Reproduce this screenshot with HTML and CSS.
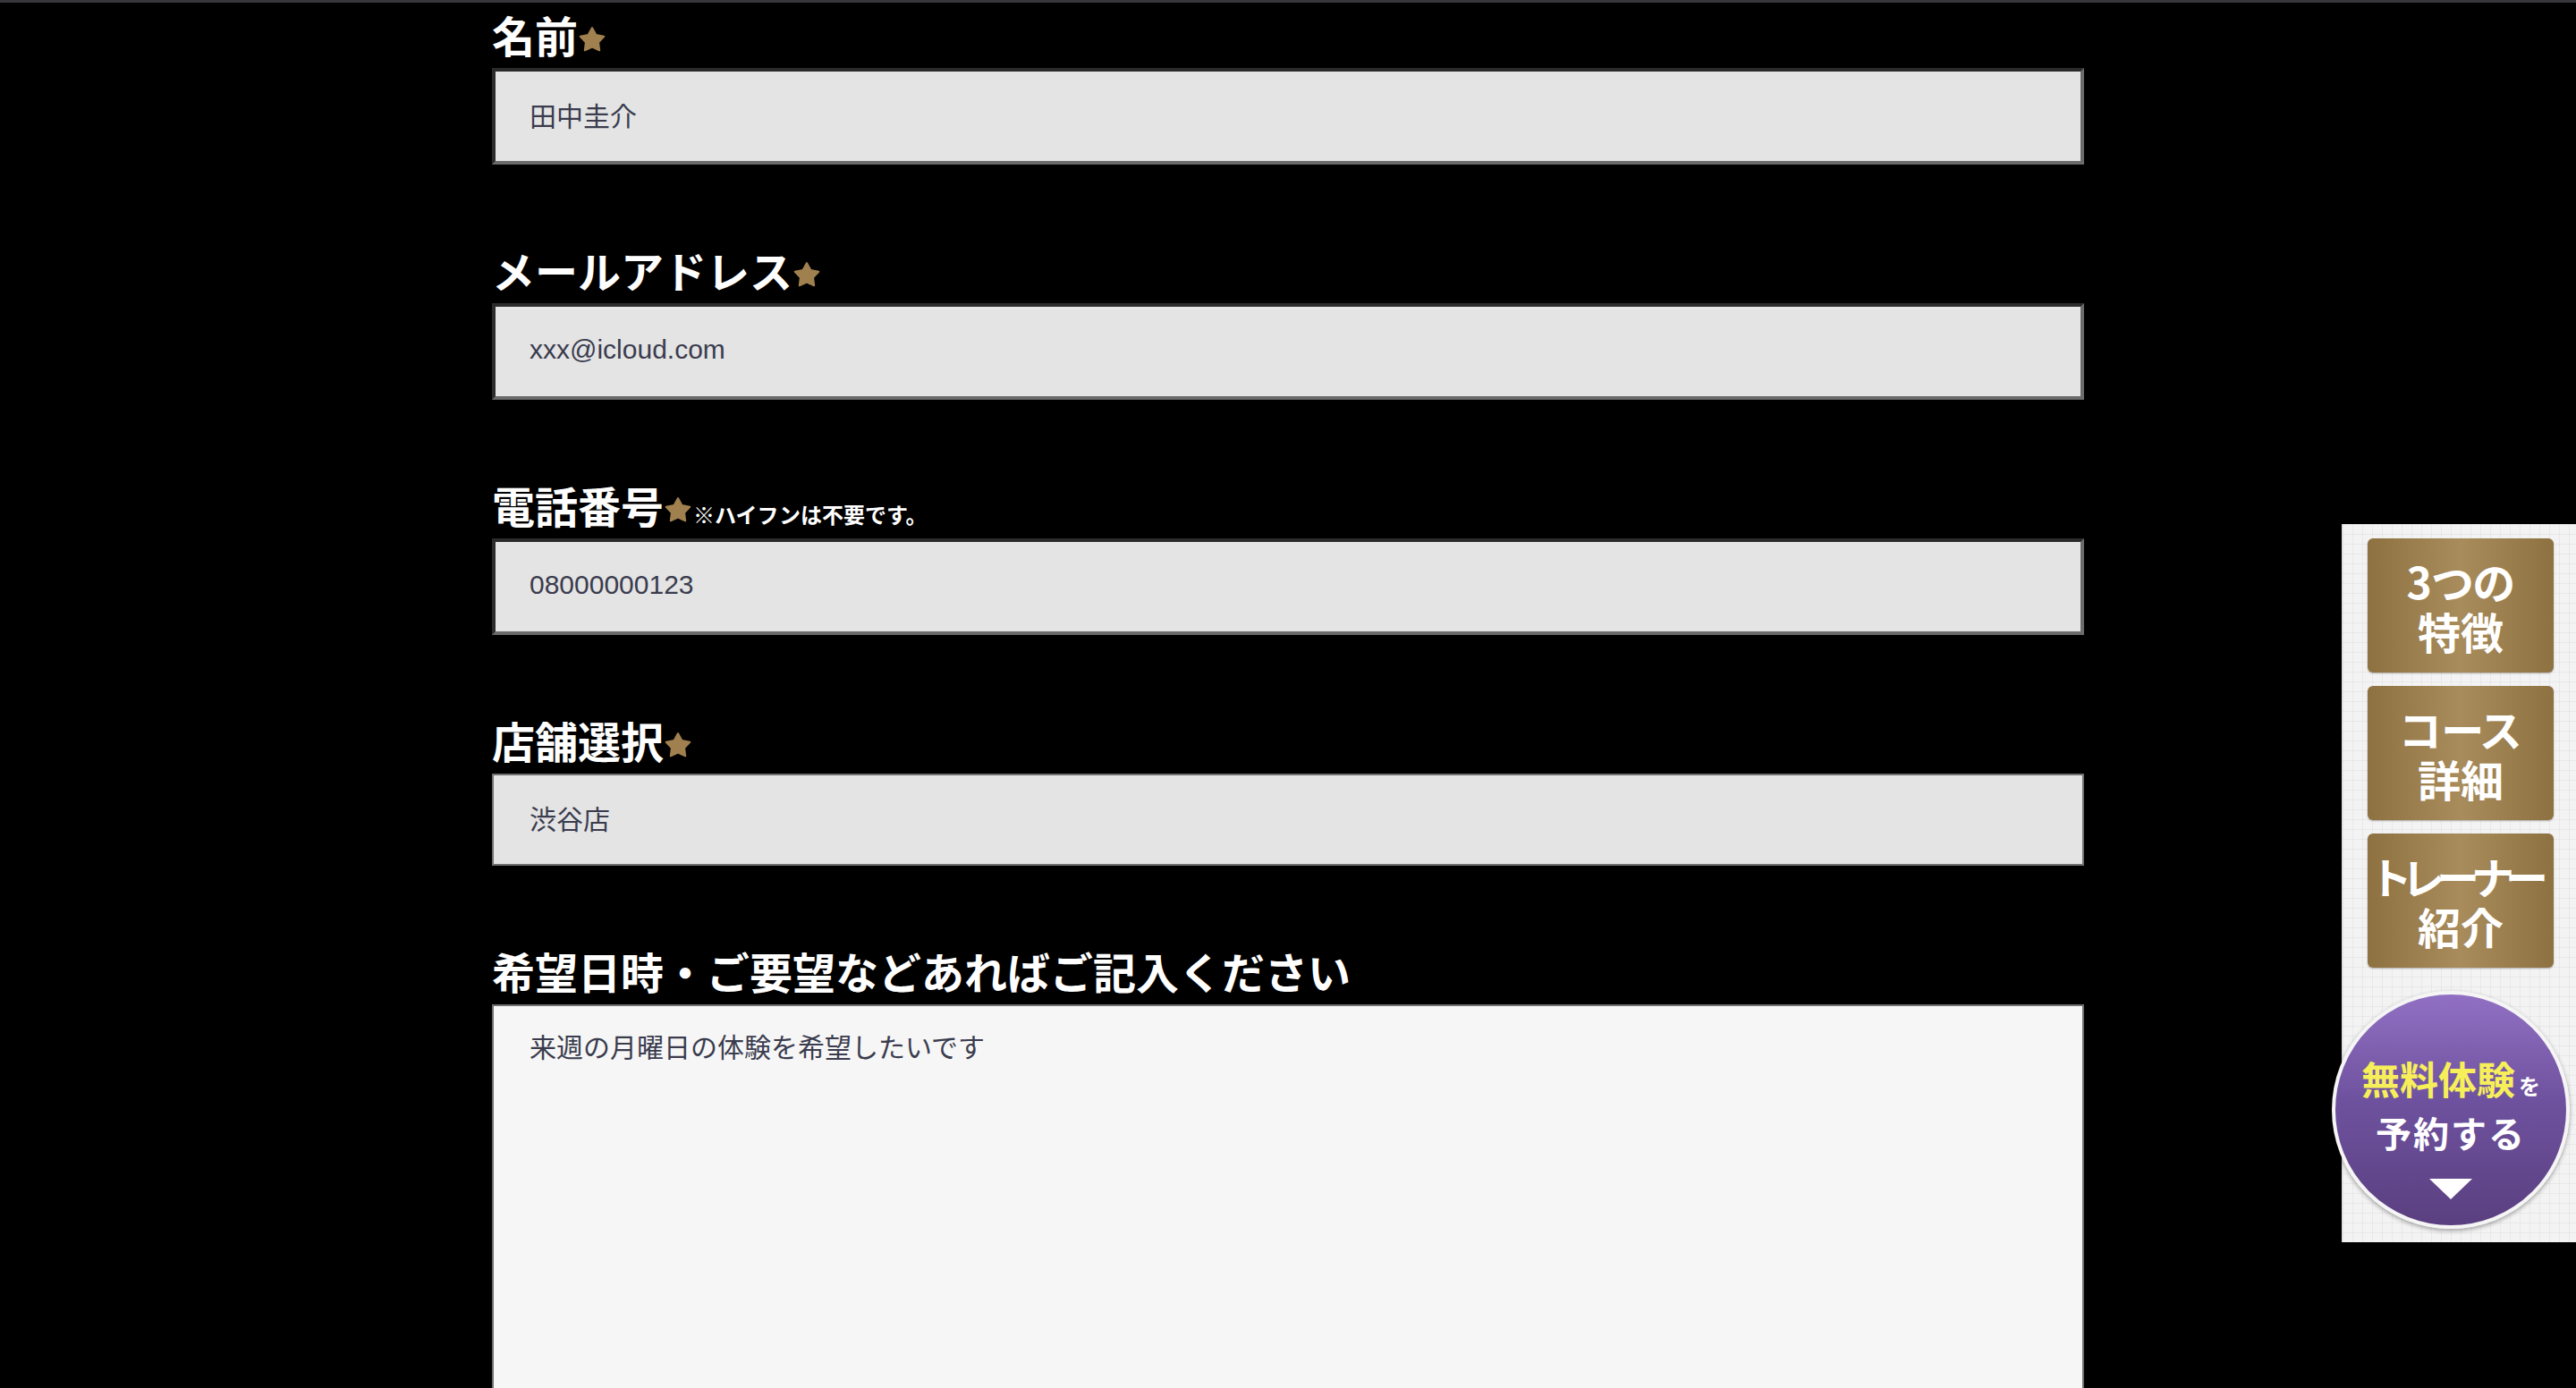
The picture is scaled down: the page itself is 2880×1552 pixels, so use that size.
FILE: index.html
```html
<!DOCTYPE html>
<html lang="ja">

<head>
    <meta charset="UTF-8">
    <title>無料体験予約フォーム</title>
    <link rel="stylesheet" href="styles.css">
</head>

<body>

    <div class="topbar"></div>

    <main class="form">
        <div class="field">
            <label class="label" for="name">名前<svg class="star" viewBox="0 0 30 30"><path d="M15 2 L19.4 9.9 L28.3 11.7 L22.1 18.3 L23.2 27.3 L15 23.5 L6.8 27.3 L7.9 18.3 L1.7 11.7 L10.6 9.9 Z" /></svg></label>
            <input class="text-input" id="name" type="text" value="田中圭介">
        </div>

        <div class="field">
            <label class="label" for="mail">メールアドレス<svg class="star" viewBox="0 0 30 30"><path d="M15 2 L19.4 9.9 L28.3 11.7 L22.1 18.3 L23.2 27.3 L15 23.5 L6.8 27.3 L7.9 18.3 L1.7 11.7 L10.6 9.9 Z" /></svg></label>
            <input class="text-input" id="mail" type="text" value="xxx@icloud.com">
        </div>

        <div class="field">
            <label class="label" for="tel">電話番号<svg class="star" viewBox="0 0 30 30"><path d="M15 2 L19.4 9.9 L28.3 11.7 L22.1 18.3 L23.2 27.3 L15 23.5 L6.8 27.3 L7.9 18.3 L1.7 11.7 L10.6 9.9 Z" /></svg><span class="note">※ハイフンは不要です。</span></label>
            <input class="text-input" id="tel" type="text" value="08000000123">
        </div>

        <div class="field">
            <label class="label" for="shop">店舗選択<svg class="star" viewBox="0 0 30 30"><path d="M15 2 L19.4 9.9 L28.3 11.7 L22.1 18.3 L23.2 27.3 L15 23.5 L6.8 27.3 L7.9 18.3 L1.7 11.7 L10.6 9.9 Z" /></svg></label>
            <select class="select" id="shop">
                <option>渋谷店</option>
            </select>
        </div>

        <div class="field">
            <label class="label" for="message">希望日時・ご要望などあればご記入ください</label>
            <textarea class="textarea" id="message">来週の月曜日の体験を希望したいです</textarea>
        </div>
    </main>

    <!-- 右側の固定メニュー -->
    <nav class="side-nav">
        <a class="side-btn" href="#"><span class="side-btn-text">3つの<br>特徴</span></a>
        <a class="side-btn" href="#"><span class="side-btn-text">コース<br>詳細</span></a>
        <a class="side-btn" href="#"><span class="side-btn-text"><span class="side-btn-tight">トレーナー</span><br>紹介</span></a>
        <a class="reserve" href="#">
            <span class="reserve-line1"><span class="reserve-yellow">無料体験</span><span class="reserve-small">を</span></span>
            <span class="reserve-line2">予約する</span>
            <span class="reserve-arrow"></span>
        </a>
    </nav>

</body>

</html>
```

FILE: styles.css
```css
html,
body {
    margin: 0;
    padding: 0;
    background-color: #000;
    font-family: "Noto Sans CJK JP", sans-serif;
}

.topbar {
    height: 3px;
    background-color: #37373b;
}

.form {
    width: 1780px;
    margin: 0 auto;
    padding-top: 7px;
}

.field {
    margin-bottom: 89px;
}

.label {
    display: block;
    height: 56px;
    margin-bottom: 10px;
    color: #fff;
    font-size: 48px;
    line-height: 56px;
    font-weight: 700;
    white-space: nowrap;
}

.star {
    width: 30px;
    height: 30px;
    margin-left: 1px;
    vertical-align: 0;
    overflow: visible;
    fill: #a0804f;
    stroke: #a0804f;
    stroke-width: 2;
    stroke-linejoin: round;
}

.note {
    font-size: 24px;
    line-height: 1;
    font-weight: 700;
    margin-left: 2px;
}

.text-input {
    display: block;
    box-sizing: border-box;
    width: 100%;
    height: 108px;
    margin: 0;
    padding: 0 38px 4px;
    border: 4px solid;
    border-color: #2b2b2b #6b6b6b #6b6b6b #2b2b2b;
    border-radius: 0;
    background-color: #e4e4e4;
    color: #3a3c4e;
    font-family: "Liberation Sans", "Noto Sans CJK JP", sans-serif;
    font-size: 30px;
    outline: none;
}

.select {
    display: block;
    box-sizing: border-box;
    width: 100%;
    height: 103px;
    margin: 0;
    padding: 0 40px;
    border: 2px solid #6f6f6f;
    border-radius: 0;
    background-color: #e4e4e4;
    color: #3a3c4e;
    font-family: "Liberation Sans", "Noto Sans CJK JP", sans-serif;
    font-size: 30px;
    -webkit-appearance: none;
    appearance: none;
    outline: none;
}

.textarea {
    display: block;
    box-sizing: border-box;
    width: 100%;
    height: 600px;
    margin: 0;
    padding: 24px 40px;
    border: 2px solid #6f6f6f;
    border-radius: 0;
    background-color: #f6f6f6;
    color: #3a3c4e;
    font-family: "Liberation Sans", "Noto Sans CJK JP", sans-serif;
    font-size: 30px;
    line-height: 45px;
    resize: none;
    outline: none;
}

/* 右側メニュー */
.side-nav {
    position: fixed;
    top: 586px;
    right: 0;
    width: 262px;
    box-sizing: border-box;
    padding: 16px 0 15px 28px;
    display: flex;
    flex-direction: column;
    align-items: flex-start;
    gap: 15px;
    border-left: 1px solid #d6d6d6;
    background-color: #f3f3f3;
    background-image:
        linear-gradient(to right, rgba(0, 0, 0, 0.045) 1px, transparent 1px),
        linear-gradient(to bottom, rgba(0, 0, 0, 0.045) 1px, transparent 1px);
    background-size: 11px 11px;
}

.side-btn {
    display: flex;
    align-items: center;
    justify-content: center;
    width: 208px;
    height: 150px;
    border-radius: 6px;
    background: linear-gradient(90deg, #8e7141 0%, #a98c5c 50%, #8e7141 100%);
    box-shadow: 0 1px 2px rgba(0, 0, 0, 0.3);
    color: #fff;
    text-decoration: none;
}

.side-btn-text {
    display: block;
    font-size: 48px;
    line-height: 56px;
    font-weight: 700;
    font-feature-settings: "palt";
    text-align: center;
    white-space: nowrap;
}

.side-btn-tight {
    letter-spacing: -7px;
    margin-left: -7px;
}

.reserve {
    display: flex;
    flex-direction: column;
    align-items: center;
    box-sizing: border-box;
    width: 266px;
    height: 266px;
    margin: 11px 0 0 -40px;
    padding-top: 61px;
    border: 4px solid #f5f5f5;
    border-radius: 50%;
    background: linear-gradient(180deg, #9170c3 0%, #6f529f 45%, #5a3f80 100%);
    box-shadow: 0 2px 5px rgba(0, 0, 0, 0.35);
    color: #fff;
    font-weight: 700;
    text-decoration: none;
}

.reserve-line1 {
    line-height: 64px;
    white-space: nowrap;
}

.reserve-yellow {
    color: #f7ef5a;
    font-size: 43px;
}

.reserve-small {
    font-size: 24px;
    margin-left: 4px;
}

.reserve-line2 {
    margin-top: -15px;
    font-size: 40px;
    line-height: 64px;
    letter-spacing: 2px;
}

.reserve-arrow {
    width: 0;
    height: 0;
    margin-top: 20px;
    border-left: 24px solid transparent;
    border-right: 24px solid transparent;
    border-top: 23px solid #fff;
}
```
